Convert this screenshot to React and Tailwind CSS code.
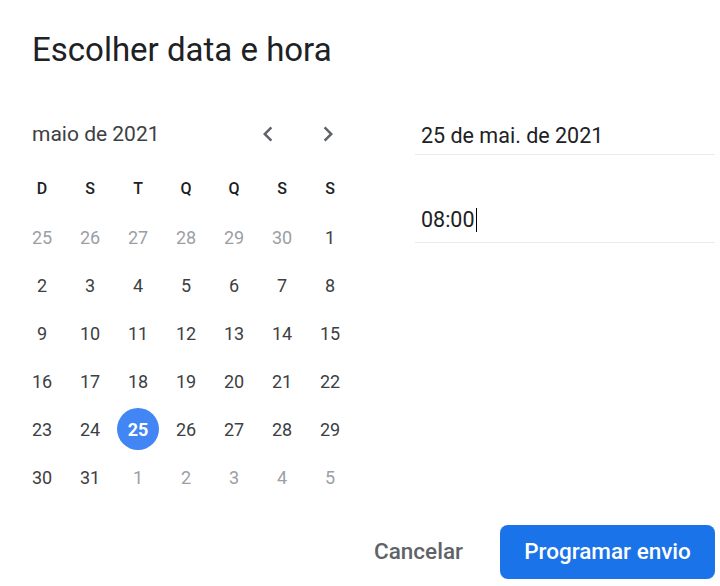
import React from "react";

const DOW = ["D", "S", "T", "Q", "Q", "S", "S"];

const WEEKS = [
  [[25, 0], [26, 0], [27, 0], [28, 0], [29, 0], [30, 0], [1, 1]],
  [[2, 1], [3, 1], [4, 1], [5, 1], [6, 1], [7, 1], [8, 1]],
  [[9, 1], [10, 1], [11, 1], [12, 1], [13, 1], [14, 1], [15, 1]],
  [[16, 1], [17, 1], [18, 1], [19, 1], [20, 1], [21, 1], [22, 1]],
  [[23, 1], [24, 1], [25, 1], [26, 1], [27, 1], [28, 1], [29, 1]],
  [[30, 1], [31, 1], [1, 0], [2, 0], [3, 0], [4, 0], [5, 0]],
];

function Chevron({ dir }) {
  return (
    <svg width="30" height="30" viewBox="0 0 24 24" fill="#5f6368">
      <path
        d={
          dir === "left"
            ? "M15.41 7.41 14 6l-6 6 6 6 1.41-1.41L10.83 12z"
            : "M8.59 16.59 10 18l6-6-6-6-1.41 1.41L13.17 12z"
        }
      />
    </svg>
  );
}

function Calendar() {
  return (
    <div className="w-[336px] ml-[18px]">
      {/* month header */}
      <div className="flex items-center h-12">
        <div className="ml-[14px] text-[21px] leading-6 text-[#3c4043]">maio de 2021</div>
        <div className="flex-1" />
        <div className="flex gap-5 mr-[6px]">
          <button className="w-10 h-10 flex items-center justify-center rounded-full">
            <Chevron dir="left" />
          </button>
          <button className="w-10 h-10 flex items-center justify-center rounded-full">
            <Chevron dir="right" />
          </button>
        </div>
      </div>

      {/* weekdays */}
      <div className="grid grid-cols-7 mt-[7px]">
        {DOW.map((d, i) => (
          <div key={i} className="h-12 flex items-center justify-center text-[16px] font-medium text-[#202124]">
            {d}
          </div>
        ))}
      </div>

      {/* days */}
      {WEEKS.map((week, w) => (
        <div key={w} className="grid grid-cols-7">
          {week.map(([n, cur], i) => {
            const sel = cur && n === 25;
            return (
              <div key={i} className="h-12 flex items-center justify-center">
                {sel ? (
                  <div className="w-[42px] h-[42px] rounded-full bg-[#4285f4] text-white font-bold text-[18px] flex items-center justify-center">
                    {n}
                  </div>
                ) : (
                  <span className={"text-[18px] " + (cur ? "text-[#3c4043]" : "text-[#9aa0a6]")}>{n}</span>
                )}
              </div>
            );
          })}
        </div>
      ))}
    </div>
  );
}

export default function App() {
  return (
    <div
      className="w-[720px] h-[586px] bg-white flex flex-col overflow-hidden"
      style={{ fontFamily: "Roboto, 'Noto Sans', sans-serif" }}
    >
      <h1 className="pl-8 pt-[30px] text-[33px] leading-10 text-[#202124]">Escolher data e hora</h1>

      <div className="flex mt-[40px]">
        <Calendar />

        {/* inputs */}
        <div className="ml-[61px] w-[300px]">
          <div className="pt-[14px] pb-[6px] pl-[6px] text-[21.5px] leading-6 text-[#202124] border-b border-[#e8eaed]">
            25 de mai. de 2021
          </div>
          <div className="mt-[39px] pt-[14px] pb-[10px] pl-[6px] text-[21.5px] leading-6 text-[#202124] border-b border-[#e8eaed] flex items-center">
            08:00
            <span className="inline-block w-px h-[24px] bg-black ml-px" />
          </div>
        </div>
      </div>

      {/* actions */}
      <div className="mt-auto mb-[7px] mr-[5px] flex items-center justify-end gap-[13px]">
        <button className="h-[54px] px-6 text-[22.5px] font-medium text-[#5f6368] rounded-lg">Cancelar</button>
        <button className="h-[54px] w-[215px] text-[22.5px] font-medium text-white bg-[#1a73e8] rounded-lg">
          Programar envio
        </button>
      </div>
    </div>
  );
}
